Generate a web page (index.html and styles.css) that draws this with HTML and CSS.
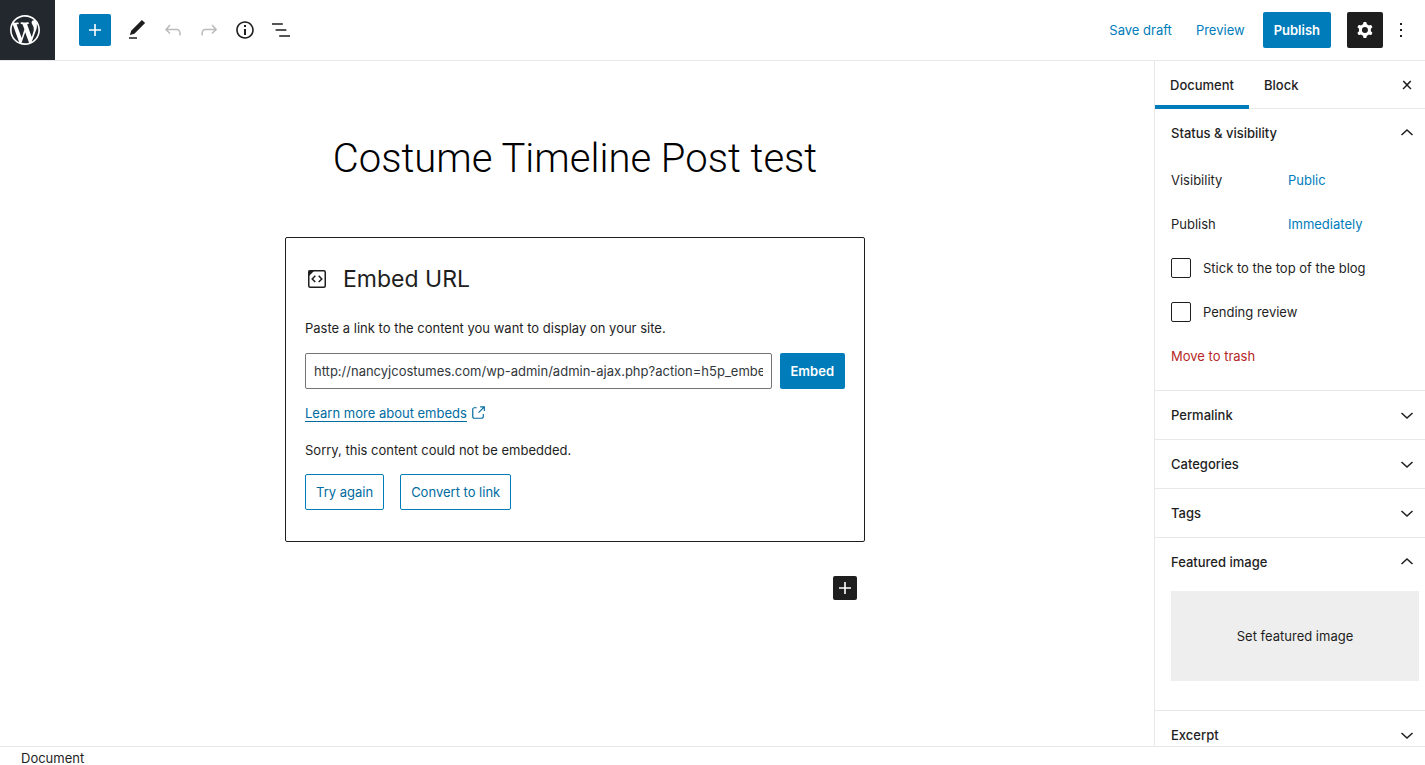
FILE: index.html
```html
<!DOCTYPE html>
<html lang="en">
<head>
  <meta charset="UTF-8">
  <meta name="viewport" content="width=device-width, initial-scale=1.0">
  <title>Edit Post</title>
  <link rel="stylesheet" href="styles.css">
</head>
<body>
  <!-- Top Toolbar -->
  <header class="header">
    <a class="logo" href="#" aria-label="View posts">
      <svg viewBox="-2 -2 24 24" width="36" height="36"><path d="M20 10c0-5.51-4.49-10-10-10C4.48 0 0 4.49 0 10c0 5.52 4.48 10 10 10 5.51 0 10-4.48 10-10zM7.78 15.37L4.37 6.22c.55-.02 1.17-.08 1.17-.08.5-.06.44-1.13-.06-1.11 0 0-1.45.11-2.37.11-.18 0-.37 0-.58-.01C4.12 2.69 6.87 1.11 10 1.11c2.33 0 4.45.87 6.05 2.34-.68-.11-1.65.39-1.65 1.58 0 .74.45 1.36.9 2.1.35.61.55 1.36.55 2.46 0 1.49-1.4 5-1.4 5l-3.03-8.37c.54-.02.82-.17.82-.17.5-.05.44-1.25-.06-1.22 0 0-1.44.12-2.38.12-.87 0-2.33-.12-2.33-.12-.5-.03-.56 1.2-.06 1.22l.92.08 1.26 3.41zM17.41 10c.24-.64.74-1.87.43-4.25.7 1.29 1.05 2.71 1.05 4.25 0 3.29-1.73 6.24-4.4 7.78.97-2.59 1.94-5.2 2.92-7.78zM6.1 18.09C3.12 16.65 1.11 13.53 1.11 10c0-1.3.23-2.48.72-3.59C3.25 10.3 4.67 14.2 6.1 18.09zm4.03-6.63l2.58 6.98c-.86.29-1.76.45-2.71.45-.79 0-1.57-.11-2.29-.33.81-2.38 1.62-4.74 2.42-7.1z"/></svg>
    </a>
    <div class="toolbar">
      <button class="icon-btn inserter" type="button" aria-label="Add block">
        <svg viewBox="0 0 24 24" width="24" height="24"><path d="M18 11.2h-5.2V6h-1.6v5.2H6v1.6h5.2V18h1.6v-5.2H18z"/></svg>
      </button>
      <button class="icon-btn" type="button" aria-label="Modes">
        <svg viewBox="0 0 24 24" width="24" height="24"><path d="M20.1 5.1L16.9 2 6.2 12.7l-1.3 4.4 4.5-1.3L20.1 5.1zM4 20.8h8v-1.5H4v1.5z"/></svg>
      </button>
      <button class="icon-btn" type="button" aria-label="Undo" disabled>
        <svg viewBox="0 0 24 24" width="24" height="24"><path d="M18.3 11.7c-.6-.6-1.4-.9-2.3-.9H6.7l2.9-3.3-1.1-1-4.5 5L8.5 16l1-1-2.7-2.7H16c.5 0 .9.2 1.3.5 1 1 1 3.4 1 4.5v.3h1.5v-.2c0-1.5 0-4.3-1.5-5.7z"/></svg>
      </button>
      <button class="icon-btn" type="button" aria-label="Redo" disabled>
        <svg viewBox="0 0 24 24" width="24" height="24"><path d="M15.6 6.5l-1.1 1 2.9 3.3H8c-.9 0-1.7.3-2.3.9-1.4 1.5-1.4 4.2-1.4 5.6v.2h1.5v-.3c0-1.1 0-3.5 1-4.5.3-.3.7-.5 1.3-.5h9.2L14.5 15l1.1 1.1 4.6-4.6-4.6-5z"/></svg>
      </button>
      <button class="icon-btn" type="button" aria-label="Content structure">
        <svg viewBox="0 0 24 24" width="24" height="24"><path d="M12 3.2c-4.8 0-8.8 3.9-8.8 8.8 0 4.8 3.9 8.8 8.8 8.8 4.8 0 8.8-3.9 8.8-8.8 0-4.8-4-8.8-8.8-8.8zm0 16c-4 0-7.2-3.3-7.2-7.2C4.8 8 8 4.8 12 4.8s7.2 3.3 7.2 7.2c0 4-3.2 7.2-7.2 7.2zM11 17h2v-6h-2v6zm0-8h2V7h-2v2z"/></svg>
      </button>
      <button class="icon-btn" type="button" aria-label="Block navigation">
        <svg viewBox="0 0 24 24" width="24" height="24"><path d="M13.8 5.2H3v1.5h10.8V5.2zm-3.6 12v1.5H21v-1.5H10.2zm7.2-6H6.6v1.5h10.8v-1.5z"/></svg>
      </button>
    </div>
    <div class="settings">
      <button class="btn btn-text" type="button">Save draft</button>
      <button class="btn btn-text" type="button">Preview</button>
      <button class="btn btn-primary publish" type="button">Publish</button>
      <button class="icon-btn gear" type="button" aria-label="Settings">
        <svg viewBox="0 0 24 24" width="24" height="24"><path fill-rule="evenodd" d="M10.289 4.836A1 1 0 0111.275 4h1.306a1 1 0 01.987.836l.244 1.466c.787.26 1.503.679 2.108 1.218l1.393-.522a1 1 0 011.216.437l.653 1.13a1 1 0 01-.23 1.273l-1.148.944a6.025 6.025 0 010 2.435l1.149.946a1 1 0 01.23 1.272l-.653 1.13a1 1 0 01-1.216.437l-1.394-.522c-.605.54-1.32.958-2.108 1.218l-.244 1.466a1 1 0 01-.987.836h-1.306a1 1 0 01-.986-.836l-.244-1.466a5.995 5.995 0 01-2.108-1.218l-1.394.522a1 1 0 01-1.217-.436l-.653-1.131a1 1 0 01.23-1.272l1.149-.946a6.026 6.026 0 010-2.435l-1.148-.944a1 1 0 01-.23-1.272l.653-1.131a1 1 0 011.217-.437l1.393.522a5.994 5.994 0 012.108-1.218l.244-1.466zM14.929 12a3 3 0 11-6 0 3 3 0 016 0z"/></svg>
      </button>
      <button class="icon-btn" type="button" aria-label="More tools and options">
        <svg viewBox="0 0 24 24" width="24" height="24"><path d="M13 19h-2v-2h2v2zm0-6h-2v-2h2v2zm0-6h-2V5h2v2z"/></svg>
      </button>
    </div>
  </header>

  <div class="content">
    <!-- Editor Canvas -->
    <main class="editor">
      <h1 class="post-title">Costume Timeline Post test</h1>

      <section class="embed">
        <h2 class="embed-label">
          <svg viewBox="0 0 24 24" width="24" height="24">
            <rect x="3.75" y="3.75" width="16.5" height="16.5" rx="1.5" fill="none" stroke="currentColor" stroke-width="1.5"/>
            <path d="M3.5 3.5H9.5L3.5 9.5z"/>
            <path d="M10.3 8.7L7.2 11.9l3.1 3.2M13.7 8.7l3.1 3.2-3.1 3.2" fill="none" stroke="currentColor" stroke-width="1.5"/>
          </svg>
          Embed URL
        </h2>
        <label class="embed-text" for="embed-url">Paste a link to the content you want to display on your site.</label>
        <form class="embed-form">
          <input class="embed-input" id="embed-url" type="text" value="http://nancyjcostumes.com/wp-admin/admin-ajax.php?action=h5p_embed">
          <button class="btn btn-primary" type="button">Embed</button>
        </form>
        <a class="learn-more" href="#">
          <span>Learn more about embeds</span>
          <svg viewBox="0 0 24 24" width="18" height="18"><path d="M18.2 17c0 .7-.6 1.2-1.2 1.2H7c-.7 0-1.2-.6-1.2-1.2V7c0-.7.6-1.2 1.2-1.2h3.2V4.2H7C5.5 4.2 4.2 5.5 4.2 7v10c0 1.5 1.2 2.8 2.8 2.8h10c1.5 0 2.8-1.2 2.8-2.8v-3.6h-1.5V17zM14.9 3v1.5h3.7l-6.4 6.4 1.1 1.1 6.4-6.4v3.7h1.5V3h-6.3z"/></svg>
        </a>
        <p class="embed-text">Sorry, this content could not be embedded.</p>
        <div class="embed-actions">
          <button class="btn btn-outline" type="button">Try again</button>
          <button class="btn btn-outline" type="button">Convert to link</button>
        </div>
      </section>

      <div class="appender">
        <button class="icon-btn appender-btn" type="button" aria-label="Add block">
          <svg viewBox="0 0 24 24" width="24" height="24"><path d="M18 11.2h-5.2V6h-1.6v5.2H6v1.6h5.2V18h1.6v-5.2H18z"/></svg>
        </button>
      </div>
    </main>

    <!-- Settings Sidebar -->
    <aside class="sidebar">
      <div class="tabs">
        <button class="tab active" type="button">Document</button>
        <button class="tab" type="button">Block</button>
        <button class="icon-btn close" type="button" aria-label="Close settings">
          <svg viewBox="0 0 24 24" width="24" height="24"><path d="M13 11.9l3.3-3.4-1.1-1-3.2 3.3-3.2-3.3-1.1 1 3.3 3.4-3.5 3.6 1 1L12 13l3.5 3.5 1-1z"/></svg>
        </button>
      </div>

      <div class="panel">
        <button class="panel-title" type="button">Status &amp; visibility
          <svg class="chevron" viewBox="0 0 24 24" width="24" height="24"><path d="M6.5 14L12 9l5.5 5"/></svg>
        </button>
        <div class="panel-body">
          <div class="row">
            <span class="row-label">Visibility</span>
            <button class="link-btn" type="button">Public</button>
          </div>
          <div class="row">
            <span class="row-label">Publish</span>
            <button class="link-btn" type="button">Immediately</button>
          </div>
          <div class="row">
            <input class="check" id="sticky" type="checkbox">
            <label for="sticky">Stick to the top of the blog</label>
          </div>
          <div class="row">
            <input class="check" id="pending" type="checkbox">
            <label for="pending">Pending review</label>
          </div>
          <div class="row">
            <button class="link-btn trash" type="button">Move to trash</button>
          </div>
        </div>
      </div>

      <div class="panel">
        <button class="panel-title" type="button">Permalink
          <svg class="chevron" viewBox="0 0 24 24" width="24" height="24"><path d="M6.5 10l5.5 5 5.5-5"/></svg>
        </button>
      </div>
      <div class="panel">
        <button class="panel-title" type="button">Categories
          <svg class="chevron" viewBox="0 0 24 24" width="24" height="24"><path d="M6.5 10l5.5 5 5.5-5"/></svg>
        </button>
      </div>
      <div class="panel">
        <button class="panel-title" type="button">Tags
          <svg class="chevron" viewBox="0 0 24 24" width="24" height="24"><path d="M6.5 10l5.5 5 5.5-5"/></svg>
        </button>
      </div>

      <div class="panel">
        <button class="panel-title" type="button">Featured image
          <svg class="chevron" viewBox="0 0 24 24" width="24" height="24"><path d="M6.5 14L12 9l5.5 5"/></svg>
        </button>
        <div class="panel-body">
          <button class="featured-image" type="button">Set featured image</button>
        </div>
      </div>

      <div class="panel">
        <button class="panel-title" type="button">Excerpt
          <svg class="chevron" viewBox="0 0 24 24" width="24" height="24"><path d="M6.5 10l5.5 5 5.5-5"/></svg>
        </button>
      </div>
    </aside>
  </div>

  <!-- Breadcrumb -->
  <footer class="footer">Document</footer>
</body>
</html>
```
FILE: styles.css
```css
/* General Reset */
* {
  box-sizing: border-box;
}

body {
  display: flex;
  flex-direction: column;
  height: 100vh;
  margin: 0;
  overflow: hidden;
  background-color: #fff;
  color: #1e1e1e;
  font-family: Inter, "Liberation Sans", sans-serif;
  font-size: 13px;
  line-height: 20px;
}

button,
input {
  font: inherit;
  color: inherit;
}

button {
  padding: 0;
  border: 0;
  background: none;
  cursor: pointer;
}

svg {
  display: block;
  flex-shrink: 0;
  fill: currentColor;
}

/* Buttons */
.btn {
  height: 36px;
  padding: 0 12px;
  border-radius: 2px;
  white-space: nowrap;
}

.btn-text {
  color: #007cba;
}

.btn-primary {
  padding: 0 11px;
  background-color: #007cba;
  color: #fff;
  font-weight: 600;
}

.btn-outline {
  padding: 0 10px;
  border: 1px solid #007cba;
  color: #006ba1;
}

.icon-btn {
  display: flex;
  align-items: center;
  justify-content: center;
  width: 36px;
  height: 36px;
  border-radius: 2px;
}

.icon-btn:disabled {
  color: #bbb;
  cursor: default;
}

/* Top Toolbar */
.header {
  display: flex;
  align-items: center;
  flex-shrink: 0;
  height: 61px;
  padding-right: 6px;
  border-bottom: 1px solid #e7e8e9;
}

.logo {
  display: flex;
  align-items: center;
  width: 55px;
  height: 60px;
  padding-left: 7px;
  background-color: #23282e;
  color: #fff;
}

.toolbar {
  display: flex;
  align-items: center;
  margin-left: 24px;
}

.inserter {
  width: 32px;
  height: 32px;
  margin-right: 8px;
  background-color: #007cba;
  color: #fff;
}

.settings {
  display: flex;
  align-items: center;
  margin-left: auto;
}

.publish {
  margin: 0 16px 0 6px;
}

.gear {
  background-color: #1e1e1e;
  color: #fff;
}

/* Main Layout */
.content {
  display: flex;
  flex: 1;
  min-height: 0;
}

/* Editor Canvas */
.editor {
  display: flex;
  flex: 1;
  flex-direction: column;
  align-items: center;
  padding: 72px 4px 0 0;
  overflow: hidden;
}

.post-title {
  margin: 0 0 52px;
  color: #000;
  font-family: Roboto, "Liberation Sans", sans-serif;
  font-size: 40px;
  font-weight: 300;
  line-height: 52px;
}

.embed {
  display: flex;
  flex-direction: column;
  width: 100%;
  max-width: 580px;
  padding: 23px 19px 31px;
  border: 1px solid #1e1e1e;
  border-radius: 2px;
}

.embed-label {
  display: flex;
  align-items: center;
  gap: 14px;
  margin: 0 0 21px;
  font-size: 23px;
  font-weight: 400;
  line-height: 36px;
}

.embed-text {
  margin: 0;
}

.embed-form {
  display: flex;
  gap: 8px;
  margin: 15px 0;
}

.embed-input {
  flex: 1;
  min-width: 0;
  height: 36px;
  padding: 0 8px;
  border: 1px solid #757575;
  border-radius: 2px;
  color: #32373c;
}

.learn-more {
  display: flex;
  align-items: center;
  align-self: flex-start;
  gap: 2px;
  margin-bottom: 18px;
  color: #006ba1;
  text-decoration: none;
}

.learn-more span {
  border-bottom: 1px solid #006ba1;
  line-height: 16px;
}

.embed-actions {
  display: flex;
  gap: 16px;
  margin-top: 14px;
}

.appender {
  display: flex;
  justify-content: flex-end;
  width: 100%;
  max-width: 580px;
  margin-top: 34px;
  padding-right: 8px;
}

.appender-btn {
  width: 24px;
  height: 24px;
  background-color: #1e1e1e;
  color: #fff;
}

/* Settings Sidebar */
.sidebar {
  flex-shrink: 0;
  width: 271px;
  border-left: 1px solid #e7e8e9;
  overflow: hidden;
}

.tabs {
  display: flex;
  align-items: center;
  height: 48px;
  padding-right: 6px;
  box-shadow: inset 0 -1px #e7e8e9;
}

.tab {
  height: 48px;
  padding: 0 15px;
  font-weight: 500;
}

.tab.active {
  box-shadow: inset 0 -4px #007cba;
}

.close {
  width: 24px;
  margin-left: auto;
}

.panel {
  border-bottom: 1px solid #e7e8e9;
}

.panel-title {
  display: flex;
  align-items: center;
  justify-content: space-between;
  width: 100%;
  height: 48px;
  padding: 0 6px 0 16px;
  font-weight: 500;
}

.chevron {
  fill: none;
  stroke: currentColor;
  stroke-width: 1.5;
}

.panel-body {
  padding: 5px 6px 16px 16px;
}

.row {
  display: flex;
  align-items: center;
  height: 36px;
  margin-bottom: 8px;
}

.row:last-child {
  margin-bottom: 0;
}

.row-label {
  width: 117px;
}

.link-btn {
  color: #007cba;
}

.trash {
  color: #b52727;
}

.check {
  appearance: none;
  width: 20px;
  height: 20px;
  margin: 0 12px 0 0;
  border: 1px solid #1e1e1e;
  border-radius: 2px;
  background-color: #fff;
}

.check:checked {
  background-color: #007cba;
}

.featured-image {
  display: block;
  width: 100%;
  min-height: 90px;
  margin-bottom: 13px;
  background-color: #eee;
}

/* Breadcrumb */
.footer {
  flex-shrink: 0;
  padding: 4px 21px 0;
  border-top: 1px solid #e7e8e9;
  line-height: 14px;
}
```
